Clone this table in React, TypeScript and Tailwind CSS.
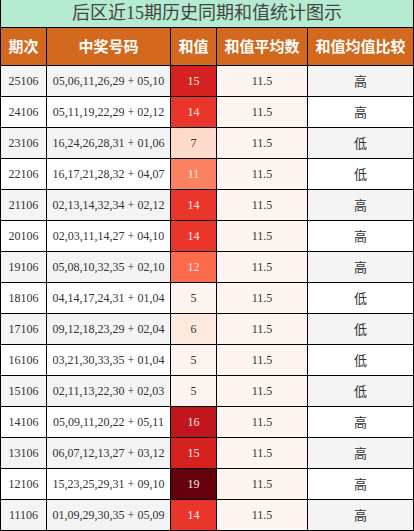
import React from "react";

type Row = { issue: string; nums: string; sum: number; cmp: string };

const rows: Row[] = [
  { issue: "25106", nums: "05,06,11,26,29 + 05,10", sum: 15, cmp: "高" },
  { issue: "24106", nums: "05,11,19,22,29 + 02,12", sum: 14, cmp: "高" },
  { issue: "23106", nums: "16,24,26,28,31 + 01,06", sum: 7, cmp: "低" },
  { issue: "22106", nums: "16,17,21,28,32 + 04,07", sum: 11, cmp: "低" },
  { issue: "21106", nums: "02,13,14,32,34 + 02,12", sum: 14, cmp: "高" },
  { issue: "20106", nums: "02,03,11,14,27 + 04,10", sum: 14, cmp: "高" },
  { issue: "19106", nums: "05,08,10,32,35 + 02,10", sum: 12, cmp: "高" },
  { issue: "18106", nums: "04,14,17,24,31 + 01,04", sum: 5, cmp: "低" },
  { issue: "17106", nums: "09,12,18,23,29 + 02,04", sum: 6, cmp: "低" },
  { issue: "16106", nums: "03,21,30,33,35 + 01,04", sum: 5, cmp: "低" },
  { issue: "15106", nums: "02,11,13,22,30 + 02,03", sum: 5, cmp: "低" },
  { issue: "14106", nums: "05,09,11,20,22 + 05,11", sum: 16, cmp: "高" },
  { issue: "13106", nums: "06,07,12,13,27 + 03,12", sum: 15, cmp: "高" },
  { issue: "12106", nums: "15,23,25,29,31 + 09,10", sum: 19, cmp: "高" },
  { issue: "11106", nums: "01,09,29,30,35 + 05,09", sum: 14, cmp: "高" },
];

const reds = ["#fff5f0", "#fee0d2", "#fcbba1", "#fc9272", "#fb6a4a", "#ef3b2c", "#cb181d", "#a50f15", "#67000d"];

function hex(h: string) {
  return [1, 3, 5].map((i) => parseInt(h.slice(i, i + 2), 16));
}
function interp(t: number) {
  const n = reds.length - 1;
  const x = Math.max(0, Math.min(1, t)) * n;
  const i = Math.min(n - 1, Math.floor(x));
  const f = x - i;
  const a = hex(reds[i]);
  const b = hex(reds[i + 1]);
  const c = a.map((v, k) => Math.round(v + (b[k] - v) * f));
  return `rgb(${c[0]},${c[1]},${c[2]})`;
}

const serif = "font-['Liberation_Serif','Noto_Sans_CJK_SC',serif]";
const cjk = "font-['Noto_Sans_CJK_SC',sans-serif]";

export default function App() {
  return (
    <div className="w-[414px] bg-white">
      <div className="border-l border-r border-black">
        <div
          className={`h-[28px] flex items-center justify-center bg-[#b5ecd1] border-b border-black text-[18px] text-[#444] ${serif}`}
        >
          后区近15期历史同期和值统计图示
        </div>
        <div className={`grid grid-cols-[46px_124px_46px_91px_1fr] h-[38px] bg-[#d2691e] text-white font-bold text-[15px] ${cjk}`}>
          <div className="flex items-center justify-center border-r border-b border-black">期次</div>
          <div className="flex items-center justify-center border-r border-b border-black">中奖号码</div>
          <div className="flex items-center justify-center border-r border-b border-black">和值</div>
          <div className="flex items-center justify-center border-r border-b border-black">和值平均数</div>
          <div className="flex items-center justify-center border-b border-black">和值均值比较</div>
        </div>
        {rows.map((r, idx) => {
          const t = (r.sum - 5) / 14;
          const light = t >= 0.4;
          const rowBg = idx % 2 === 0 ? "bg-[#f4f4f4]" : "bg-white";
          return (
            <div key={r.issue} className={`grid grid-cols-[46px_124px_46px_91px_1fr] h-[31px] text-[12px] text-[#333] ${serif}`}>
              <div className={`flex items-center justify-center border-r border-b border-black ${rowBg}`}>{r.issue}</div>
              <div className={`flex items-center justify-center border-r border-b border-black ${rowBg}`}>{r.nums}</div>
              <div
                className={`flex items-center justify-center border-r border-b border-black ${light ? "text-[#fde8e4]" : "text-[#333]"}`}
                style={{ backgroundColor: interp(t) }}
              >
                {r.sum}
              </div>
              <div className="flex items-center justify-center border-r border-b border-black bg-[#fff5f0]">11.5</div>
              <div className={`flex items-center justify-center border-b border-black text-[13px] ${cjk} ${rowBg}`}>{r.cmp}</div>
            </div>
          );
        })}
      </div>
    </div>
  );
}
